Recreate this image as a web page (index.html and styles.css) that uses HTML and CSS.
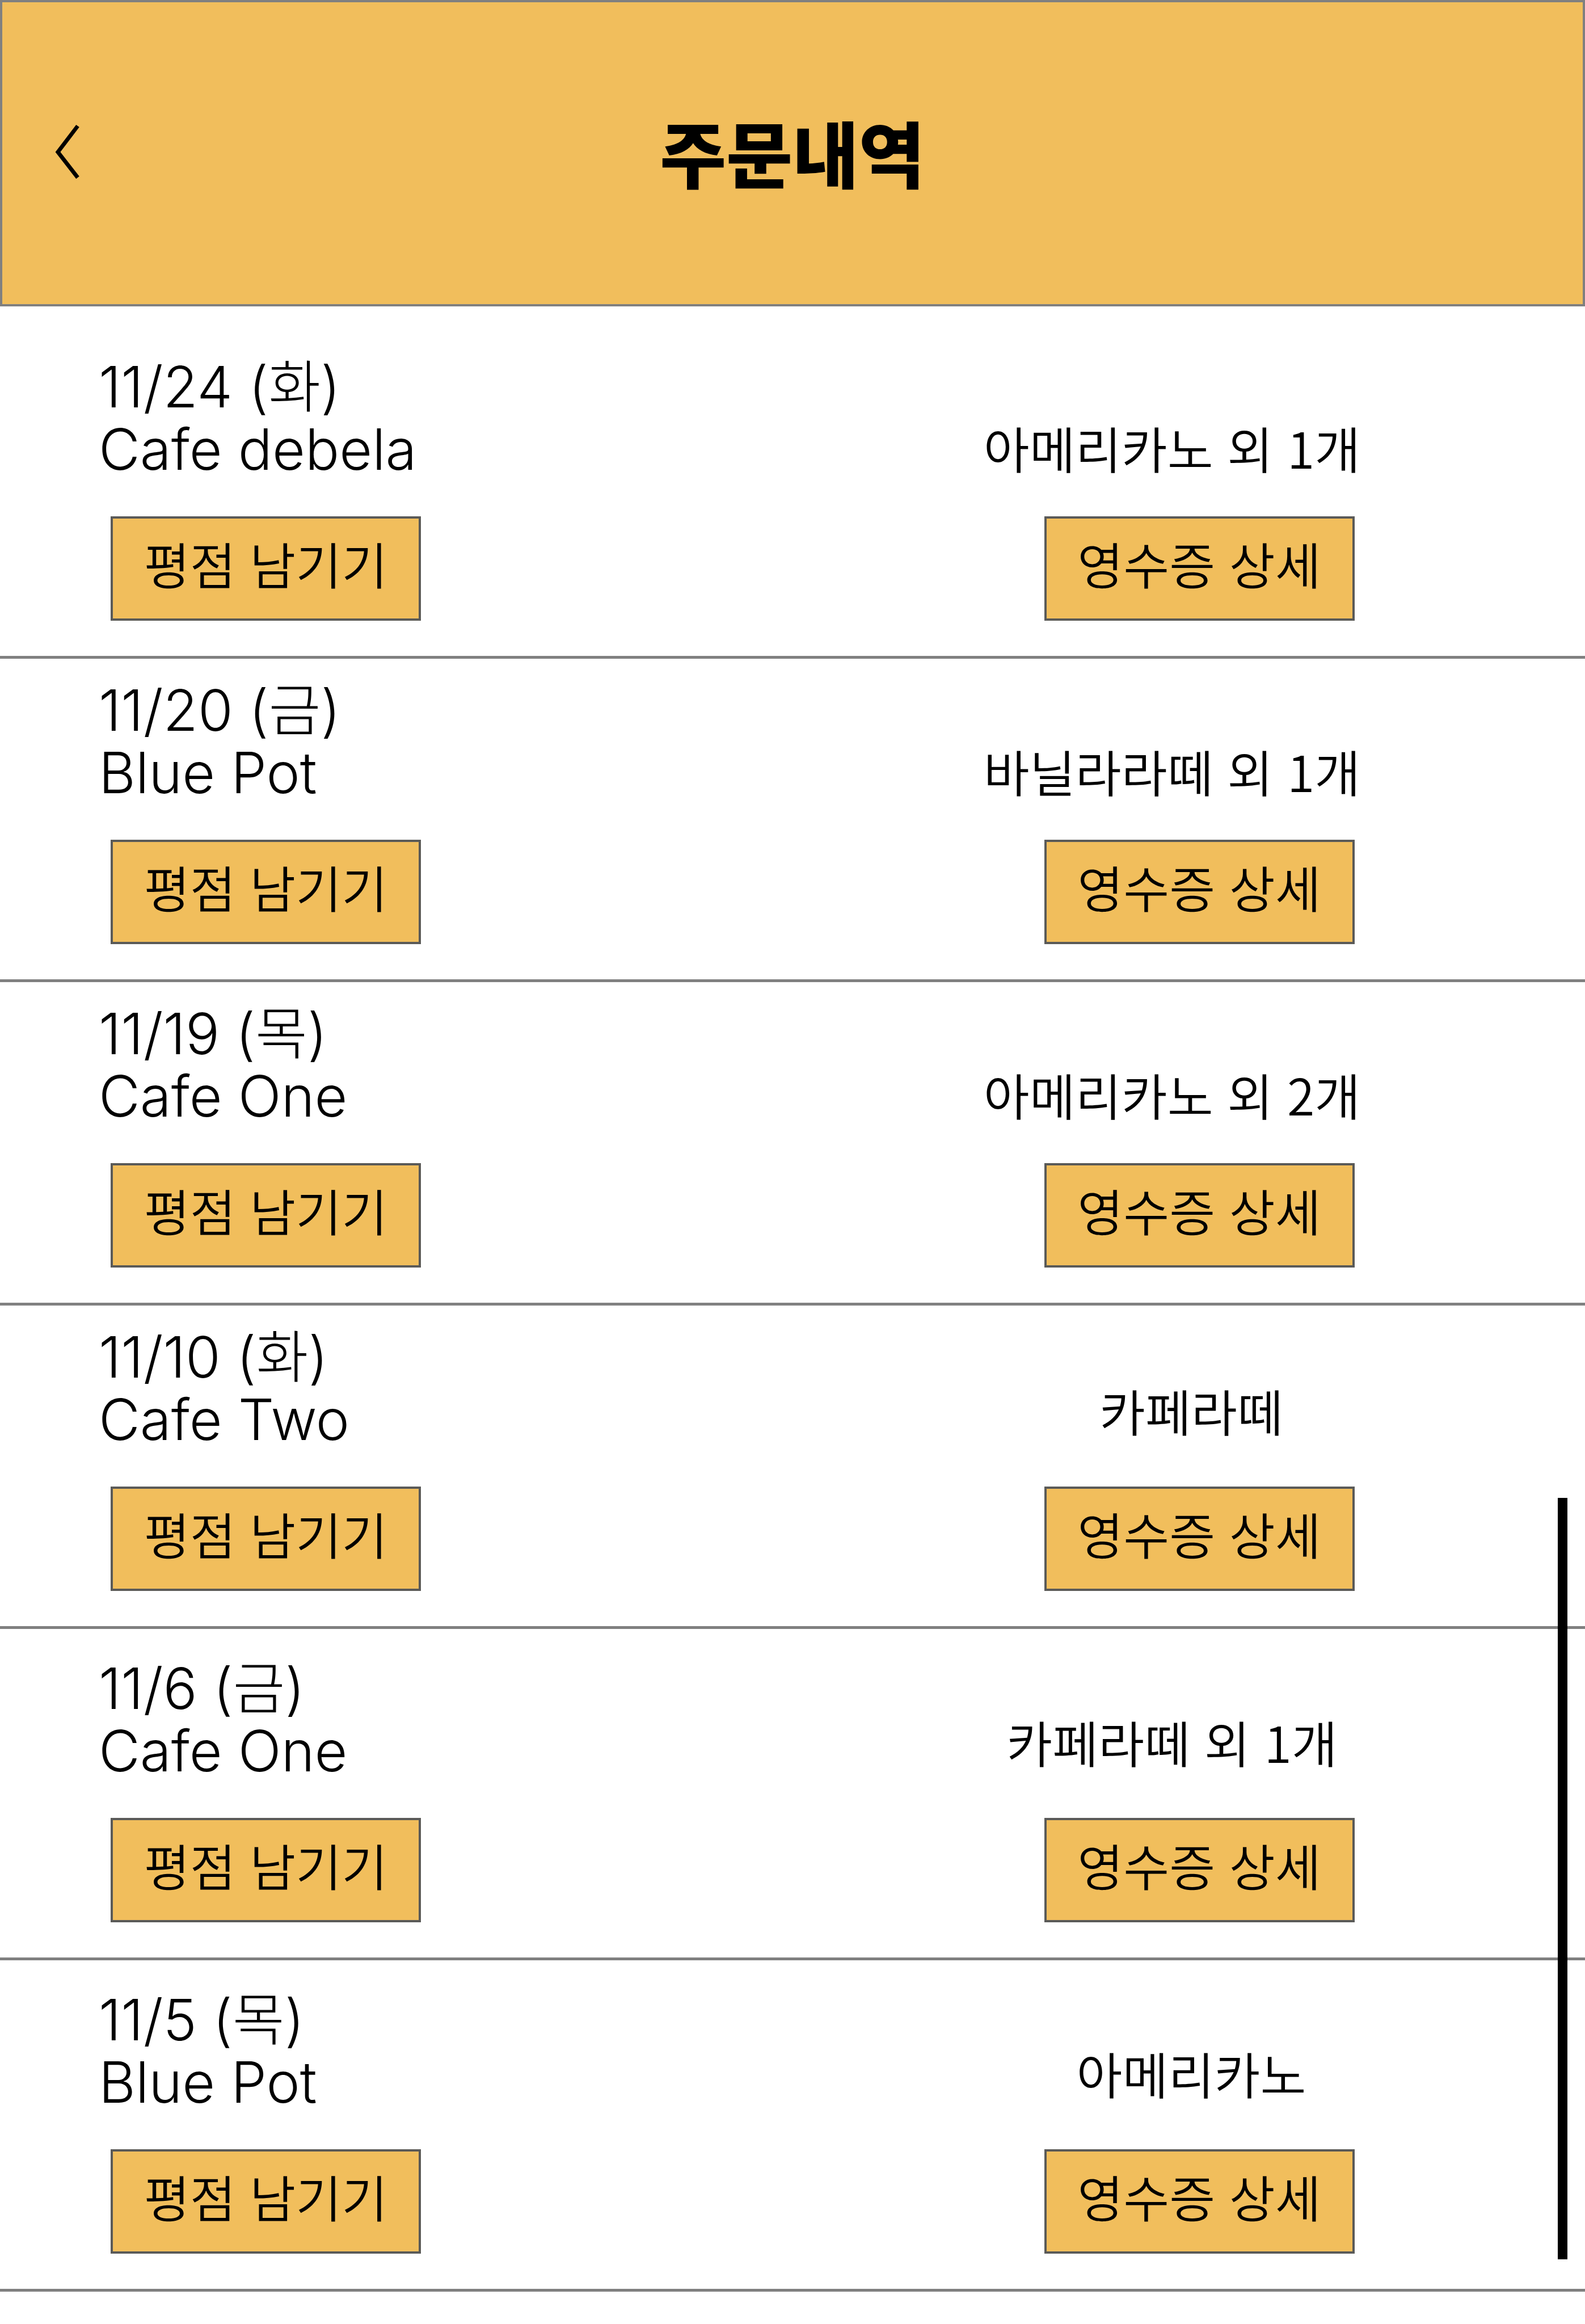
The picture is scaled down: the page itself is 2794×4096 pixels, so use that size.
FILE: index.html
```html
<!DOCTYPE html>
<html lang="ko">
<head>
<meta charset="utf-8">
<meta name="viewport" content="width=device-width, initial-scale=1">
<title>주문내역</title>
<link rel="stylesheet" href="styles.css">
</head>
<body>
<header class="topbar">
  <button class="back" type="button" aria-label="뒤로">
    <svg class="back-icon" viewBox="0 0 44 96" aria-hidden="true"><path d="M41 3 L6 49 L41 94"/></svg>
  </button>
  <h1 class="title">주문내역</h1>
</header>
<main class="history">
  <ul class="orders">
    <li class="order order--first">
      <div class="place"><time class="date">11/24 (화)</time><h2 class="cafe">Cafe debela</h2></div>
      <p class="menu">아메리카노 외 1개</p>
      <button class="action action--rate" type="button">평점 남기기</button>
      <button class="action action--receipt" type="button">영수증 상세</button>
    </li>
    <li class="order">
      <div class="place"><time class="date">11/20 (금)</time><h2 class="cafe">Blue Pot</h2></div>
      <p class="menu">바닐라라떼 외 1개</p>
      <button class="action action--rate" type="button">평점 남기기</button>
      <button class="action action--receipt" type="button">영수증 상세</button>
    </li>
    <li class="order">
      <div class="place"><time class="date">11/19 (목)</time><h2 class="cafe">Cafe One</h2></div>
      <p class="menu">아메리카노 외 2개</p>
      <button class="action action--rate" type="button">평점 남기기</button>
      <button class="action action--receipt" type="button">영수증 상세</button>
    </li>
    <li class="order">
      <div class="place"><time class="date">11/10 (화)</time><h2 class="cafe">Cafe Two</h2></div>
      <p class="menu menu--single menu--raised">카페라떼</p>
      <button class="action action--rate" type="button">평점 남기기</button>
      <button class="action action--receipt" type="button">영수증 상세</button>
    </li>
    <li class="order order--roomy">
      <div class="place"><time class="date">11/6 (금)</time><h2 class="cafe">Cafe One</h2></div>
      <p class="menu menu--raised">카페라떼 외 1개</p>
      <button class="action action--rate" type="button">평점 남기기</button>
      <button class="action action--receipt" type="button">영수증 상세</button>
    </li>
    <li class="order order--roomy">
      <div class="place"><time class="date">11/5 (목)</time><h2 class="cafe">Blue Pot</h2></div>
      <p class="menu menu--single menu--raised">아메리카노</p>
      <button class="action action--rate" type="button">평점 남기기</button>
      <button class="action action--receipt" type="button">영수증 상세</button>
    </li>
  </ul>
  <div class="scroll-thumb" aria-hidden="true"></div>
</main>
</body>
</html>
```
FILE: styles.css
```css
:root {
  --amber: #f1be5c;
  --line: #808080;
  --button-line: #5a5a58;
  --korean: "Noto Sans CJK KR", sans-serif;
  --latin: Inter, "Noto Sans CJK KR", sans-serif;
}

* {
  box-sizing: border-box;
}

body {
  margin: 0;
  min-height: 100vh;
  background: #fff;
  color: #000;
  font-family: var(--korean);
}

/* Header */
.topbar {
  display: grid;
  grid-template-columns: 1fr auto 1fr;
  align-items: center;
  height: 540px;
  padding: 0 92px 6px;
  background: var(--amber);
  border: 4px solid var(--line);
}

.back {
  justify-self: start;
  padding: 0;
  border: 0;
  background: none;
  line-height: 0;
  cursor: pointer;
}

.back-icon {
  width: 44px;
  height: 96px;
  fill: none;
  stroke: #000;
  stroke-width: 7;
}

.title {
  margin: 0;
  font-size: 127px;
  font-weight: 900;
  line-height: 180px;
}

/* Order list */
.history {
  position: relative;
}

.orders {
  margin: 0;
  padding: 0;
  list-style: none;
}

.order {
  display: grid;
  grid-template-columns: 1fr 1360px;
  row-gap: 63px;
  padding: 36px 0 62px 174px;
  border-bottom: 5px solid var(--line);
}

.order--first {
  padding-top: 87px;
}

.order--roomy {
  padding-top: 50px;
}

.date,
.cafe {
  display: block;
  margin: 0;
  font-family: var(--latin);
  font-size: 100px;
  font-weight: 300;
  line-height: 110px;
}

.menu {
  align-self: end;
  margin: 0;
  padding: 0 96px 4px 0;
  font-size: 88px;
  font-weight: 350;
  line-height: 110px;
  text-align: center;
}

.menu--single {
  padding-right: 28px;
}

.menu--raised {
  padding-bottom: 17px;
}

.action {
  width: 547px;
  height: 184px;
  padding: 0 0 20px;
  background: var(--amber);
  border: 4px solid var(--button-line);
  color: inherit;
  font-family: var(--korean);
  font-size: 88px;
  font-weight: 350;
  line-height: 110px;
  white-space: nowrap;
  cursor: pointer;
}

.action--rate {
  margin-left: 21px;
}

.action--receipt {
  justify-self: center;
}

/* Scroll position marker, over the list */
.scroll-thumb {
  position: absolute;
  right: 31px;
  bottom: 57px;
  width: 17px;
  height: 1342px;
  background: #000;
}
```
